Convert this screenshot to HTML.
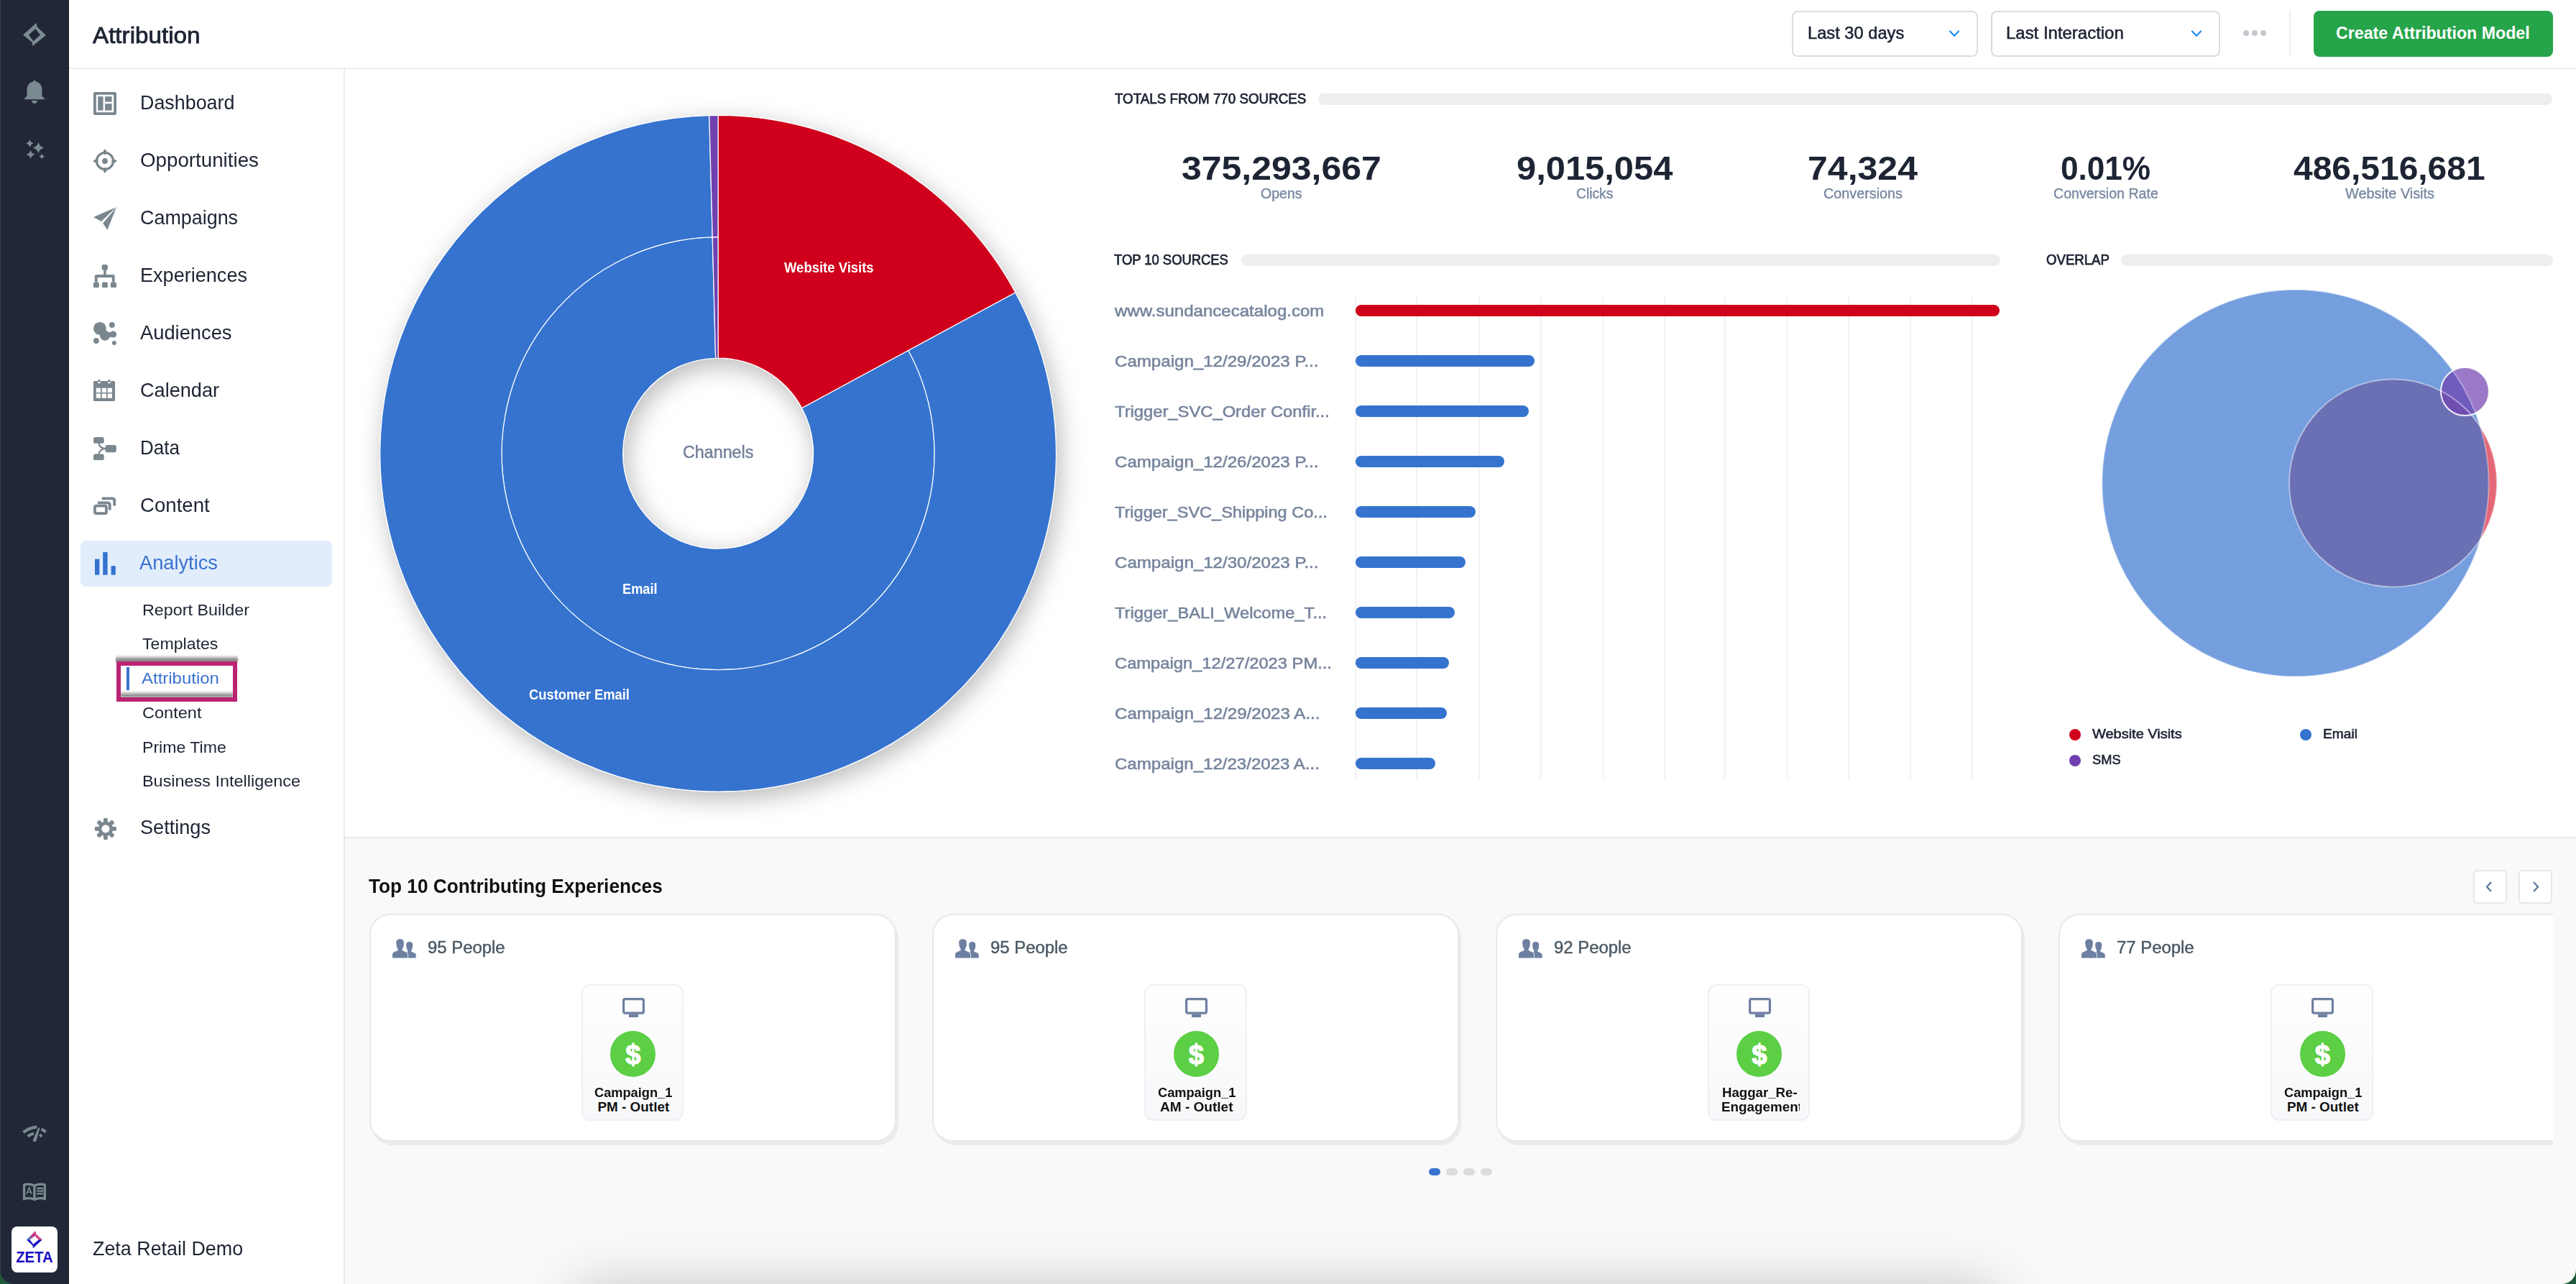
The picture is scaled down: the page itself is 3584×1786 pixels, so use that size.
<!DOCTYPE html><html><head><meta charset="utf-8"><style>
html,body{margin:0;padding:0;width:3584px;height:1786px;overflow:hidden;background:#fff}
body{position:relative;font-family:"Liberation Sans",sans-serif}
.t{position:absolute;white-space:nowrap}
</style></head><body>
<div style="position:absolute;left:0px;top:0px;width:96px;height:1786px;background:#212737"></div>
<div style="position:absolute;left:0px;top:0px;width:1px;height:1770px;background:#3c4150"></div>
<div style="position:absolute;left:95px;top:0px;width:1px;height:1786px;background:#171b26"></div>
<div style="position:absolute;left:96px;top:0px;width:3488px;height:94px;background:#fff"></div>
<div style="position:absolute;left:96px;top:94px;width:3488px;height:2px;background:#ebebeb"></div>
<div style="position:absolute;left:96px;top:96px;width:382px;height:1690px;background:#fff"></div>
<div style="position:absolute;left:478px;top:96px;width:2px;height:1690px;background:#ebebeb"></div>
<div style="position:absolute;left:480px;top:96px;width:3104px;height:1068px;background:#fff"></div>
<div style="position:absolute;left:480px;top:1164px;width:3104px;height:2px;background:#ebebeb"></div>
<div style="position:absolute;left:480px;top:1166px;width:3104px;height:620px;background:#f9f9f9"></div>
<div class="t" style="left:128.50px;top:35.00px;font-size:30.7px;line-height:30.7px;color:#1d2433;transform:scaleX(1.0818);transform-origin:0 0;-webkit-text-stroke:0.8px #1d2433;">Attribution</div>
<div style="position:absolute;left:2493px;top:15px;width:259px;height:63.5px;box-sizing:border-box;border:2px solid #dcdcdc;border-radius:8px;background:#fff"></div>
<div class="t" style="left:2514.70px;top:35.00px;font-size:23.4px;line-height:23.4px;color:#1d2433;transform:scaleX(1.0121);transform-origin:0 0;-webkit-text-stroke:0.55px #1d2433;">Last 30 days</div>
<div style="position:absolute;left:2769.6px;top:15px;width:319px;height:63.5px;box-sizing:border-box;border:2px solid #dcdcdc;border-radius:8px;background:#fff"></div>
<div class="t" style="left:2791.20px;top:35.00px;font-size:23.4px;line-height:23.4px;color:#1d2433;transform:scaleX(1.0238);transform-origin:0 0;-webkit-text-stroke:0.55px #1d2433;">Last Interaction</div>
<svg style="position:absolute;left:2711px;top:40px" width="16" height="14" viewBox="0 0 16 14"><path d="M2 3.5 L8 9.8 L14 3.5" fill="none" stroke="#1f8ef1" stroke-width="2.3" stroke-linecap="round" stroke-linejoin="round"/></svg>
<svg style="position:absolute;left:3047.5px;top:40px" width="16" height="14" viewBox="0 0 16 14"><path d="M2 3.5 L8 9.8 L14 3.5" fill="none" stroke="#1f8ef1" stroke-width="2.3" stroke-linecap="round" stroke-linejoin="round"/></svg>
<div style="position:absolute;left:3120.5px;top:42px;width:8px;height:8px;border-radius:50%;background:#c4c8cf"></div>
<div style="position:absolute;left:3132.5px;top:42px;width:8px;height:8px;border-radius:50%;background:#c4c8cf"></div>
<div style="position:absolute;left:3144.5px;top:42px;width:8px;height:8px;border-radius:50%;background:#c4c8cf"></div>
<div style="position:absolute;left:3185px;top:15px;width:2px;height:63px;background:#ececec"></div>
<div style="position:absolute;left:3219px;top:15px;width:333px;height:63.8px;background:#26a44a;border-radius:8px"></div>
<div class="t" style="left:3250.00px;top:35.00px;font-size:23.2px;line-height:23.2px;color:#fff;font-weight:700;">Create Attribution Model</div>
<svg style="position:absolute;left:28px;top:28px" width="40" height="40" viewBox="28 28 40 40"><path fill="#7b8a90" fill-rule="evenodd" d="M50.6 31.9 L51.8 37.5 L63.9 49 L45.5 63.9 L44.3 58.5 L32.1 48.5 Z M49.3 40 L40 48.6 L46.4 57.2 L56 48.6 Z"/></svg>
<svg style="position:absolute;left:28px;top:28px;display:none" width="1" height="1"></svg>
<svg style="position:absolute;left:32px;top:110px" width="32" height="36" viewBox="0 0 32 36"><path fill="#7b8a90" d="M16 2 C17 2 17.8 2.6 18 3.6 C23.5 4.8 26.5 9.5 26.5 15 L26.5 23 C26.5 24 27.5 25 29 25.8 C30.3 26.5 30.3 28.2 29 28.2 L3 28.2 C1.7 28.2 1.7 26.5 3 25.8 C4.5 25 5.5 24 5.5 23 L5.5 15 C5.5 9.5 8.5 4.8 14 3.6 C14.2 2.6 15 2 16 2 Z M12 30 L20 30 C19.5 32.5 18 34 16 34 C14 34 12.5 32.5 12 30 Z"/></svg>
<svg style="position:absolute;left:0;top:180px" width="96" height="60" viewBox="0 180 96 60"><g fill="#7b8a90"><path d="M53.40 197.70 Q55.12 203.78 61.20 205.50 Q55.12 207.22 53.40 213.30 Q51.68 207.22 45.60 205.50 Q51.68 203.78 53.40 197.70 Z"/><path d="M41.40 194.00 Q42.59 198.21 46.80 199.40 Q42.59 200.59 41.40 204.80 Q40.21 200.59 36.00 199.40 Q40.21 198.21 41.40 194.00 Z"/><path d="M42.60 208.70 Q43.94 213.46 48.70 214.80 Q43.94 216.14 42.60 220.90 Q41.26 216.14 36.50 214.80 Q41.26 213.46 42.60 208.70 Z"/><path d="M58.20 213.70 Q59.06 216.74 62.10 217.60 Q59.06 218.46 58.20 221.50 Q57.34 218.46 54.30 217.60 Q57.34 216.74 58.20 213.70 Z"/></g></svg>
<svg style="position:absolute;left:0;top:1550px" width="96" height="140" viewBox="0 1550 96 140"><g fill="none" stroke="#7b8a90" stroke-width="4.2"><path d="M32.4 1575.2 Q40.5 1568.6 51.2 1567.6"/><path d="M57.6 1570.6 Q61 1572 63.6 1574.8"/><path d="M38.6 1580.6 Q42.3 1577.8 46.8 1576.4"/><path d="M55.2 1578.2 L58.2 1580.8" stroke-width="3.6"/></g><path fill="#7b8a90" d="M53.4 1568.2 L55.5 1568.9 L50.8 1586.2 Q49.6 1588.9 47.1 1588.1 Q45.3 1587.2 46 1585.3 Z"/><path fill="none" stroke="#7b8a90" stroke-width="3.3" d="M33.6 1649 Q33.6 1647.5 35.5 1647.4 Q42 1646.2 47.9 1649.3 Q54 1646.2 60.4 1647.4 Q62.3 1647.5 62.3 1649 L62.3 1667.6 Q55 1665.4 47.9 1668.6 Q41 1665.4 33.6 1667.6 Z M47.9 1649.3 L47.9 1668.4"/><path fill="none" stroke="#7b8a90" stroke-width="1.6" d="M37 1661 L40.6 1652 L44.2 1661 M38.2 1658.2 L43 1658.2"/><path fill="none" stroke="#7b8a90" stroke-width="2.4" d="M51.2 1653.4 Q55.5 1652 60 1653.4 M51.2 1657.1 Q55.5 1655.7 60 1657.1 M51.2 1660.8 Q55.5 1659.4 60 1660.8"/></svg>
<div style="position:absolute;left:16px;top:1706px;width:64px;height:64px;background:#fff;border-radius:8px"></div>
<svg style="position:absolute;left:16px;top:1706px" width="64" height="64" viewBox="0 0 64 64"><defs><linearGradient id="zg1" x1="21" y1="18" x2="43" y2="8" gradientUnits="userSpaceOnUse"><stop offset="0" stop-color="#22b0e0"/><stop offset="0.45" stop-color="#d4307a"/><stop offset="0.75" stop-color="#e05a80"/><stop offset="1" stop-color="#f8e040"/></linearGradient></defs><path fill-rule="evenodd" fill="#1a10c0" d="M33.3 6.4 L34 10.5 L42.7 18.4 L30 30.3 L29.4 26.5 L21 18.4 Z M32.6 12.8 L25.5 18.4 L30.3 24.7 L37.8 18.4 Z"/><path fill="url(#zg1)" d="M33.3 6.4 L34 10.5 L42.7 18.4 L37.8 18.4 L32.6 12.8 L25.5 18.4 L21 18.4 Z"/><text x="0" y="50.1" font-family="Liberation Sans" font-weight="700" font-size="21.8" fill="#1a10c0" transform="translate(6.2 0) scale(0.93 1)">ZETA</text></svg>
<div class="t" style="left:195.30px;top:129.00px;font-size:28px;line-height:28px;color:#1d2433;transform:scaleX(0.9591);transform-origin:0 0;">Dashboard</div>
<div class="t" style="left:195.30px;top:209.00px;font-size:28px;line-height:28px;color:#1d2433;transform:scaleX(0.9904);transform-origin:0 0;">Opportunities</div>
<div class="t" style="left:195.30px;top:289.00px;font-size:28px;line-height:28px;color:#1d2433;transform:scaleX(0.9605);transform-origin:0 0;">Campaigns</div>
<div class="t" style="left:195.30px;top:369.00px;font-size:28px;line-height:28px;color:#1d2433;transform:scaleX(0.9669);transform-origin:0 0;">Experiences</div>
<div class="t" style="left:195.30px;top:449.00px;font-size:28px;line-height:28px;color:#1d2433;transform:scaleX(0.9748);transform-origin:0 0;">Audiences</div>
<div class="t" style="left:195.30px;top:529.00px;font-size:28px;line-height:28px;color:#1d2433;transform:scaleX(0.9683);transform-origin:0 0;">Calendar</div>
<div class="t" style="left:195.30px;top:609.00px;font-size:28px;line-height:28px;color:#1d2433;transform:scaleX(0.9291);transform-origin:0 0;">Data</div>
<div class="t" style="left:195.30px;top:689.00px;font-size:28px;line-height:28px;color:#1d2433;transform:scaleX(0.9857);transform-origin:0 0;">Content</div>
<div style="position:absolute;left:112px;top:752px;width:350px;height:64px;background:#e2edfc;border-radius:8px"></div>
<div class="t" style="left:194.40px;top:769.00px;font-size:28px;line-height:28px;color:#3a72cf;transform:scaleX(0.9723);transform-origin:0 0;">Analytics</div>
<div class="t" style="left:197.50px;top:837.00px;font-size:22.8px;line-height:22.8px;color:#1d2433;transform:scaleX(1.0226);transform-origin:0 0;">Report Builder</div>
<div class="t" style="left:197.50px;top:884.00px;font-size:22.8px;line-height:22.8px;color:#1d2433;transform:scaleX(1.0135);transform-origin:0 0;">Templates</div>
<div class="t" style="left:197.50px;top:932.00px;font-size:22.8px;line-height:22.8px;color:#3a72cf;transform:scaleX(1.0516);transform-origin:0 0;">Attribution</div>
<div class="t" style="left:197.50px;top:980.00px;font-size:22.8px;line-height:22.8px;color:#1d2433;transform:scaleX(1.0325);transform-origin:0 0;">Content</div>
<div class="t" style="left:197.50px;top:1028.00px;font-size:22.8px;line-height:22.8px;color:#1d2433;transform:scaleX(1.0130);transform-origin:0 0;">Prime Time</div>
<div class="t" style="left:197.50px;top:1075.00px;font-size:22.8px;line-height:22.8px;color:#1d2433;transform:scaleX(1.0271);transform-origin:0 0;">Business Intelligence</div>
<div class="t" style="left:194.70px;top:1137.00px;font-size:28px;line-height:28px;color:#1d2433;transform:scaleX(0.9684);transform-origin:0 0;">Settings</div>
<div class="t" style="left:128.90px;top:1723.00px;font-size:27.4px;line-height:27.4px;color:#1d2433;transform:scaleX(0.9812);transform-origin:0 0;">Zeta Retail Demo</div>
<svg style="position:absolute;left:130px;top:128px" width="32" height="32" viewBox="0 0 32 32"><rect x="0" y="0" width="32" height="32" rx="2.5" fill="#7a878e"/><rect x="3.8" y="3.8" width="24.4" height="24.4" fill="#fff"/><rect x="6.2" y="6.2" width="7.4" height="19.4" fill="#7a878e"/><rect x="16" y="6.2" width="9.6" height="7.4" fill="#7a878e"/><rect x="16" y="16.2" width="9.6" height="9.4" fill="#7a878e"/></svg>
<svg style="position:absolute;left:130px;top:208px" width="32" height="32" viewBox="0 0 32 32"><g fill="#7a878e"><circle cx="16" cy="16" r="11.6" fill="none" stroke="#7a878e" stroke-width="3.3"/><circle cx="16" cy="16" r="3.9"/><ellipse cx="16" cy="3.3" rx="2.1" ry="3.6"/><ellipse cx="16" cy="28.7" rx="2.1" ry="3.6"/><ellipse cx="3.3" cy="16" rx="3.6" ry="2.1"/><ellipse cx="28.7" cy="16" rx="3.6" ry="2.1"/></g></svg>
<svg style="position:absolute;left:130px;top:288px" width="32" height="32" viewBox="0 0 32 32"><g fill="#7a878e"><path d="M0 14.1 L31.5 0.3 L11 20 Z"/><path d="M32 0.5 L13.2 22.6 L19.3 31.7 Z"/></g></svg>
<svg style="position:absolute;left:130px;top:368px" width="32" height="32" viewBox="0 0 32 32"><g fill="#7a878e"><rect x="11.7" y="0" width="8.2" height="7.8" rx="2"/><rect x="14.2" y="7" width="3.5" height="11"/><path d="M1.8 24.5 L1.8 16 Q1.8 13.9 3.9 13.9 L27.5 13.9 Q29.6 13.9 29.6 16 L29.6 24.5 L25.8 24.5 L25.8 18 L5.6 18 L5.6 24.5 Z"/><rect x="0" y="24.4" width="7.9" height="7.9" rx="2"/><rect x="11.9" y="24.4" width="8" height="7.9" rx="2"/><rect x="23.9" y="24.4" width="8.1" height="7.9" rx="2"/></g></svg>
<svg style="position:absolute;left:130px;top:448px" width="32" height="32" viewBox="0 0 32 32"><g fill="#7a878e"><circle cx="8.9" cy="8.9" r="8.9"/><circle cx="16" cy="18.8" r="7"/><path d="M10 12 L20 15 L14 22 Z"/><circle cx="27.5" cy="17" r="4.6"/><path d="M19 15 L26 13.5 L26 20.5 L20 22 Z"/><circle cx="25.8" cy="4" r="4"/><circle cx="3.9" cy="26" r="3.9"/><circle cx="28.9" cy="29" r="3"/></g></svg>
<svg style="position:absolute;left:130px;top:528px" width="32" height="32" viewBox="0 0 32 32"><g fill="#7a878e"><path fill-rule="evenodd" d="M0 3.5 Q0 2 1.5 2 L5.8 2 Q6 5.5 8 5.5 Q10 5.5 10.2 2 L19.8 2 Q20 5.5 22 5.5 Q24 5.5 24.2 2 L28.5 2 Q30 2 30 3.5 L30 28.5 Q30 30 28.5 30 L1.5 30 Q0 30 0 28.5 Z M3.8 11.8 H10 V18 H3.8 Z M11.7 11.8 H18 V18 H11.7 Z M19.6 11.8 H26 V18 H19.6 Z M3.8 19.6 H10 V25.8 H3.8 Z M11.7 19.6 H18 V25.8 H11.7 Z M19.6 19.6 H26 V25.8 H19.6 Z"/><ellipse cx="7.9" cy="1.8" rx="1.8" ry="2"/><ellipse cx="21.9" cy="1.8" rx="1.8" ry="2"/></g></svg>
<svg style="position:absolute;left:130px;top:608px" width="32" height="32" viewBox="0 0 32 32"><g fill="#7a878e"><rect x="0" y="0" width="14.7" height="8.7" rx="2.5"/><rect x="0" y="23.5" width="14.7" height="8.7" rx="2.5"/><rect x="16.6" y="10.9" width="15.2" height="10.3" rx="2.5"/><path d="M7.3 8 C8 12.5 11 15.5 17 16 C11 16.5 8 19.5 7.3 24" fill="none" stroke="#7a878e" stroke-width="2.2"/></g></svg>
<svg style="position:absolute;left:130px;top:688px" width="32" height="32" viewBox="0 0 32 32"><g fill="none" stroke="#7a878e" stroke-width="3.8"><rect x="1.9" y="15.6" width="16" height="10.6" rx="2"/><path d="M5.8 11.3 L19.8 11.3 Q22.7 11.3 22.7 14.2 L22.7 21.5"/><path d="M11.8 5.3 L26.3 5.3 Q29.2 5.3 29.2 8.2 L29.2 15.5"/></g></svg>
<svg style="position:absolute;left:132px;top:768px" width="32" height="32" viewBox="0 0 32 32"><g fill="#3572cf"><rect x="0" y="9.6" width="6.4" height="22.1"/><rect x="11.2" y="0" width="6.4" height="31.7"/><rect x="22.6" y="19.2" width="6.2" height="12.5"/></g></svg>
<svg style="position:absolute;left:130px;top:1136px" width="32" height="32" viewBox="0 0 32 32"><g transform="translate(16.9 16.9)" fill="#7a878e"><circle r="10.2"/><rect x="-2.9" y="-15" width="5.8" height="8" rx="1.3" transform="rotate(0)"/><rect x="-2.9" y="-15" width="5.8" height="8" rx="1.3" transform="rotate(45)"/><rect x="-2.9" y="-15" width="5.8" height="8" rx="1.3" transform="rotate(90)"/><rect x="-2.9" y="-15" width="5.8" height="8" rx="1.3" transform="rotate(135)"/><rect x="-2.9" y="-15" width="5.8" height="8" rx="1.3" transform="rotate(180)"/><rect x="-2.9" y="-15" width="5.8" height="8" rx="1.3" transform="rotate(225)"/><rect x="-2.9" y="-15" width="5.8" height="8" rx="1.3" transform="rotate(270)"/><rect x="-2.9" y="-15" width="5.8" height="8" rx="1.3" transform="rotate(315)"/><circle r="5.6" fill="#fff"/></g></svg>
<div style="position:absolute;left:161px;top:912px;width:170px;height:9px;background:linear-gradient(rgba(0,0,0,0.05),rgba(0,0,0,0.55) 75%,rgba(0,0,0,0.3));filter:blur(1px)"></div>
<div style="position:absolute;left:162px;top:920px;width:168px;height:56px;box-sizing:border-box;border:6px solid #bc2373;background:#fff"></div>
<div style="position:absolute;left:168px;top:961px;width:156px;height:9px;background:linear-gradient(rgba(0,0,0,0),rgba(0,0,0,0.5) 80%,rgba(0,0,0,0.3));filter:blur(1px)"></div>
<div style="position:absolute;left:176px;top:928px;width:4px;height:32px;background:#3a72cf"></div>
<div class="t" style="left:196.50px;top:932.00px;font-size:22.8px;line-height:22.8px;color:#3a72cf;transform:scaleX(1.0516);transform-origin:0 0;">Attribution</div>
<svg style="position:absolute;left:0;top:0" width="1560" height="1160" viewBox="0 0 1560 1160"><defs><filter id="ds" x="-20%" y="-20%" width="140%" height="140%"><feDropShadow dx="5" dy="10" stdDeviation="17" flood-color="#000" flood-opacity="0.27"/></filter></defs><g filter="url(#ds)" stroke="#fff" stroke-width="1.2" stroke-linejoin="round"><path fill="#d0021b" d="M999.10 160.40 A470.3 470.3 0 0 1 1412.80 407.01 L1115.65 567.68 A132.5 132.5 0 0 0 999.10 498.20 Z"/><path fill="#3573cf" d="M1263.87 487.54 A301 301 0 1 1 991.22 329.80 L995.63 498.25 A132.5 132.5 0 1 0 1115.65 567.68 Z"/><path fill="#3573cf" d="M1412.80 407.01 A470.3 470.3 0 1 1 986.79 160.56 L991.22 329.80 A301 301 0 1 0 1263.87 487.54 Z"/><path fill="#7040b0" d="M991.22 329.80 A301 301 0 0 1 999.10 329.70 L999.10 498.20 A132.5 132.5 0 0 0 995.63 498.25 Z"/><path fill="#7040b0" d="M986.79 160.56 A470.3 470.3 0 0 1 999.10 160.40 L999.10 329.70 A301 301 0 0 0 991.22 329.80 Z"/></g></svg>
<div class="t" style="left:1090.75px;top:363.00px;font-size:19.6px;line-height:19.6px;color:#fff;font-weight:700;transform:scaleX(0.9433);transform-origin:0 0;">Website Visits</div>
<div class="t" style="left:866.40px;top:809.00px;font-size:20px;line-height:20px;color:#fff;font-weight:700;transform:scaleX(0.9101);transform-origin:0 0;">Email</div>
<div class="t" style="left:736.00px;top:956.00px;font-size:20px;line-height:20px;color:#fff;font-weight:700;transform:scaleX(0.9192);transform-origin:0 0;">Customer Email</div>
<div class="t" style="left:949.80px;top:618.00px;font-size:23.1px;line-height:23.1px;color:#74829a;transform:scaleX(1.0082);transform-origin:0 0;-webkit-text-stroke:0.5px #74829a;">Channels</div>
<div class="t" style="left:1551.00px;top:128.00px;font-size:19.8px;line-height:19.8px;color:#1d2433;transform:scaleX(0.9487);transform-origin:0 0;-webkit-text-stroke:0.75px #1d2433;">TOTALS FROM 770 SOURCES</div>
<div style="position:absolute;left:1834px;top:129.5px;width:1717px;height:16px;background:#edeef0;border-radius:8px"></div>
<div class="t" style="left:1644.05px;top:211.00px;font-size:46.6px;line-height:46.6px;color:#1d2433;font-weight:700;transform:scaleX(1.0718);transform-origin:0 0;">375,293,667</div>
<div class="t" style="left:1754.15px;top:259.00px;font-size:20px;line-height:20px;color:#7b8aa3;transform:scaleX(0.9762);transform-origin:0 0;-webkit-text-stroke:0.45px #7b8aa3;">Opens</div>
<div class="t" style="left:2110.00px;top:211.00px;font-size:46.6px;line-height:46.6px;color:#1d2433;font-weight:700;transform:scaleX(1.0487);transform-origin:0 0;">9,015,054</div>
<div class="t" style="left:2193.05px;top:259.00px;font-size:20px;line-height:20px;color:#7b8aa3;transform:scaleX(0.9625);transform-origin:0 0;-webkit-text-stroke:0.45px #7b8aa3;">Clicks</div>
<div class="t" style="left:2515.00px;top:211.00px;font-size:46.6px;line-height:46.6px;color:#1d2433;font-weight:700;transform:scaleX(1.0737);transform-origin:0 0;">74,324</div>
<div class="t" style="left:2536.50px;top:259.00px;font-size:20px;line-height:20px;color:#7b8aa3;transform:scaleX(0.9892);transform-origin:0 0;-webkit-text-stroke:0.45px #7b8aa3;">Conversions</div>
<div class="t" style="left:2867.10px;top:211.00px;font-size:46.6px;line-height:46.6px;color:#1d2433;font-weight:700;transform:scaleX(0.9463);transform-origin:0 0;">0.01%</div>
<div class="t" style="left:2856.70px;top:259.00px;font-size:20px;line-height:20px;color:#7b8aa3;transform:scaleX(0.9785);transform-origin:0 0;-webkit-text-stroke:0.45px #7b8aa3;">Conversion Rate</div>
<div class="t" style="left:3191.20px;top:211.00px;font-size:46.6px;line-height:46.6px;color:#1d2433;font-weight:700;transform:scaleX(1.0289);transform-origin:0 0;">486,516,681</div>
<div class="t" style="left:3262.50px;top:259.00px;font-size:20px;line-height:20px;color:#7b8aa3;transform:scaleX(0.9928);transform-origin:0 0;-webkit-text-stroke:0.45px #7b8aa3;">Website Visits</div>
<div class="t" style="left:1550.40px;top:352.00px;font-size:19.3px;line-height:19.3px;color:#1d2433;transform:scaleX(0.9544);transform-origin:0 0;-webkit-text-stroke:0.75px #1d2433;">TOP 10 SOURCES</div>
<div style="position:absolute;left:1726.6px;top:353.8px;width:1056px;height:16px;background:#edeef0;border-radius:8px"></div>
<div style="position:absolute;left:1885px;top:412px;width:2px;height:670.5px;background:#f0f1f3"></div>
<div style="position:absolute;left:1970px;top:412px;width:2px;height:670.5px;background:#f0f1f3"></div>
<div style="position:absolute;left:2057px;top:412px;width:2px;height:670.5px;background:#f0f1f3"></div>
<div style="position:absolute;left:2143px;top:412px;width:2px;height:670.5px;background:#f0f1f3"></div>
<div style="position:absolute;left:2229px;top:412px;width:2px;height:670.5px;background:#f0f1f3"></div>
<div style="position:absolute;left:2315px;top:412px;width:2px;height:670.5px;background:#f0f1f3"></div>
<div style="position:absolute;left:2399px;top:412px;width:2px;height:670.5px;background:#f0f1f3"></div>
<div style="position:absolute;left:2485px;top:412px;width:2px;height:670.5px;background:#f0f1f3"></div>
<div style="position:absolute;left:2571px;top:412px;width:2px;height:670.5px;background:#f0f1f3"></div>
<div style="position:absolute;left:2657px;top:412px;width:2px;height:670.5px;background:#f0f1f3"></div>
<div style="position:absolute;left:2743px;top:412px;width:2px;height:670.5px;background:#f0f1f3"></div>
<div class="t" style="left:1551.01px;top:421.00px;font-size:22.9px;line-height:22.9px;color:#77859d;transform:scaleX(1.0504);transform-origin:0 0;-webkit-text-stroke:0.6px #77859d;">www.sundancecatalog.com</div>
<div style="position:absolute;left:1885.9px;top:424.0px;width:896.5999999999999px;height:16px;background:#d0021b;border-radius:8px"></div>
<div class="t" style="left:1550.90px;top:491.00px;font-size:22.9px;line-height:22.9px;color:#77859d;transform:scaleX(1.0523);transform-origin:0 0;-webkit-text-stroke:0.6px #77859d;">Campaign_12/29/2023 P...</div>
<div style="position:absolute;left:1885.9px;top:493.95px;width:249.5px;height:16px;background:#3573cf;border-radius:8px"></div>
<div class="t" style="left:1550.90px;top:561.00px;font-size:22.9px;line-height:22.9px;color:#77859d;transform:scaleX(1.0378);transform-origin:0 0;-webkit-text-stroke:0.6px #77859d;">Trigger_SVC_Order Confir...</div>
<div style="position:absolute;left:1885.9px;top:563.9px;width:241.5999999999999px;height:16px;background:#3573cf;border-radius:8px"></div>
<div class="t" style="left:1550.90px;top:631.00px;font-size:22.9px;line-height:22.9px;color:#77859d;transform:scaleX(1.0523);transform-origin:0 0;-webkit-text-stroke:0.6px #77859d;">Campaign_12/26/2023 P...</div>
<div style="position:absolute;left:1885.9px;top:633.85px;width:207.5999999999999px;height:16px;background:#3573cf;border-radius:8px"></div>
<div class="t" style="left:1550.90px;top:701.00px;font-size:22.9px;line-height:22.9px;color:#77859d;transform:scaleX(1.0274);transform-origin:0 0;-webkit-text-stroke:0.6px #77859d;">Trigger_SVC_Shipping Co...</div>
<div style="position:absolute;left:1885.9px;top:703.8px;width:167.5px;height:16px;background:#3573cf;border-radius:8px"></div>
<div class="t" style="left:1550.90px;top:771.00px;font-size:22.9px;line-height:22.9px;color:#77859d;transform:scaleX(1.0523);transform-origin:0 0;-webkit-text-stroke:0.6px #77859d;">Campaign_12/30/2023 P...</div>
<div style="position:absolute;left:1885.9px;top:773.75px;width:153.5px;height:16px;background:#3573cf;border-radius:8px"></div>
<div class="t" style="left:1550.90px;top:841.00px;font-size:22.9px;line-height:22.9px;color:#77859d;transform:scaleX(1.0358);transform-origin:0 0;-webkit-text-stroke:0.6px #77859d;">Trigger_BALI_Welcome_T...</div>
<div style="position:absolute;left:1885.9px;top:843.7px;width:137.69999999999982px;height:16px;background:#3573cf;border-radius:8px"></div>
<div class="t" style="left:1550.90px;top:911.00px;font-size:22.9px;line-height:22.9px;color:#77859d;transform:scaleX(1.0360);transform-origin:0 0;-webkit-text-stroke:0.6px #77859d;">Campaign_12/27/2023 PM...</div>
<div style="position:absolute;left:1885.9px;top:913.6500000000001px;width:129.79999999999995px;height:16px;background:#3573cf;border-radius:8px"></div>
<div class="t" style="left:1550.90px;top:981.00px;font-size:22.9px;line-height:22.9px;color:#77859d;transform:scaleX(1.0531);transform-origin:0 0;-webkit-text-stroke:0.6px #77859d;">Campaign_12/29/2023 A...</div>
<div style="position:absolute;left:1885.9px;top:983.6px;width:127.39999999999986px;height:16px;background:#3573cf;border-radius:8px"></div>
<div class="t" style="left:1550.90px;top:1051.00px;font-size:22.9px;line-height:22.9px;color:#77859d;transform:scaleX(1.0509);transform-origin:0 0;-webkit-text-stroke:0.6px #77859d;">Campaign_12/23/2023 A...</div>
<div style="position:absolute;left:1885.9px;top:1053.5500000000002px;width:111.59999999999991px;height:16px;background:#3573cf;border-radius:8px"></div>
<div class="t" style="left:2847.30px;top:352.00px;font-size:19.3px;line-height:19.3px;color:#1d2433;transform:scaleX(0.9649);transform-origin:0 0;-webkit-text-stroke:0.75px #1d2433;">OVERLAP</div>
<div style="position:absolute;left:2950.6px;top:353.8px;width:601px;height:16px;background:#edeef0;border-radius:8px"></div>
<svg style="position:absolute;left:2800px;top:380px" width="784" height="620" viewBox="2800 380 784 620"><circle cx="3329.5" cy="672" r="144.5" fill="#d0021b" fill-opacity="0.6"/><circle cx="3193.6" cy="672" r="269" fill="#3573cf" fill-opacity="0.69"/><circle cx="3429.5" cy="544.5" r="33.5" fill="#7040b0" fill-opacity="0.7"/><g fill="none" stroke="#fff" stroke-width="2"><circle cx="3329.5" cy="672" r="144.5" stroke-opacity="0.45"/><circle cx="3193.6" cy="672" r="269" stroke-opacity="0.35"/><circle cx="3429.5" cy="544.5" r="33.5" stroke-opacity="0.9"/></g></svg>
<div style="position:absolute;left:2878.9px;top:1013.9px;width:16px;height:16px;background:#d0021b;border-radius:50%"></div>
<div class="t" style="left:2911.10px;top:1011.00px;font-size:19px;line-height:19px;color:#1d2433;transform:scaleX(1.0506);transform-origin:0 0;-webkit-text-stroke:0.6px #1d2433;">Website Visits</div>
<div style="position:absolute;left:3199.5px;top:1013.9px;width:16px;height:16px;background:#3573cf;border-radius:50%"></div>
<div class="t" style="left:3231.70px;top:1011.00px;font-size:19px;line-height:19px;color:#1d2433;transform:scaleX(1.0084);transform-origin:0 0;-webkit-text-stroke:0.6px #1d2433;">Email</div>
<div style="position:absolute;left:2878.9px;top:1049.9px;width:16px;height:16px;background:#7040b0;border-radius:50%"></div>
<div class="t" style="left:2911.10px;top:1047.00px;font-size:19px;line-height:19px;color:#1d2433;transform:scaleX(0.9612);transform-origin:0 0;-webkit-text-stroke:0.6px #1d2433;">SMS</div>
<div class="t" style="left:512.80px;top:1219.00px;font-size:27.3px;line-height:27.3px;color:#111;font-weight:700;transform:scaleX(0.9601);transform-origin:0 0;">Top 10 Contributing Experiences</div>
<div style="position:absolute;left:3440.5px;top:1210.4px;width:47px;height:47px;box-sizing:border-box;border:2px solid #e7e7e7;border-radius:5px;background:#fff"></div>
<svg style="position:absolute;left:3456.0px;top:1223px" width="16" height="22" viewBox="0 0 16 22"><path d="M10 4 L4 10.5 L10 17" fill="none" stroke="#647aa0" stroke-width="2.4" stroke-linecap="butt" stroke-linejoin="miter"/></svg>
<div style="position:absolute;left:3504.3px;top:1210.4px;width:47px;height:47px;box-sizing:border-box;border:2px solid #e7e7e7;border-radius:5px;background:#fff"></div>
<svg style="position:absolute;left:3519.8px;top:1223px" width="16" height="22" viewBox="0 0 16 22"><path d="M5 4 L11 10.5 L5 17" fill="none" stroke="#647aa0" stroke-width="2.4" stroke-linecap="butt" stroke-linejoin="miter"/></svg>
<div style="position:absolute;left:480px;top:1260px;width:3072px;height:360px;overflow:hidden">
<div style="position:absolute;left:36.60000000000002px;top:15.5px;width:733.3px;height:317.3px;border-radius:29px;background:#ebebeb"></div>
<div style="position:absolute;left:33.60000000000002px;top:10.5px;width:733.3px;height:317.3px;box-sizing:border-box;border:2px solid #e9e9e9;border-radius:29px;background:#fff"></div>
<svg style="position:absolute;left:65.60000000000002px;top:45.700000000000045px" width="34" height="28" viewBox="545.9 1305.7 34 28"><path d="M545.9 1332.3 L545.9 1327 Q546 1324.9 548.3 1323.9 L553.4 1321.8 L553.6 1319.8 Q551.8 1318.2 551.5 1315 L551 1310.5 Q551.3 1305.9 556.5 1305.9 Q561.6 1305.9 561.8 1310.5 L561.5 1315 Q561.2 1318.2 559.4 1319.8 L559.6 1321.8 L564.6 1323.9 Q567 1324.9 567 1327 L567 1332.3 Z" fill="#6e80a2" transform="translate(569.6 1332.3) scale(0.852) translate(-556.45 -1332.3)"/><path d="M545.9 1332.3 L545.9 1327 Q546 1324.9 548.3 1323.9 L553.4 1321.8 L553.6 1319.8 Q551.8 1318.2 551.5 1315 L551 1310.5 Q551.3 1305.9 556.5 1305.9 Q561.6 1305.9 561.8 1310.5 L561.5 1315 Q561.2 1318.2 559.4 1319.8 L559.6 1321.8 L564.6 1323.9 Q567 1324.9 567 1327 L567 1332.3 Z" fill="#6e80a2" stroke="#fff" stroke-width="1.5" paint-order="stroke"/></svg>
<div style="position:absolute;left:328.70000000000005px;top:109px;width:142.6px;height:190.3px;box-sizing:border-box;border:2px solid #eef0f3;border-radius:12px;background:linear-gradient(#fefefe,#f7f8fa)"></div>
<svg style="position:absolute;left:385.6px;top:127.59999999999991px" width="31" height="28" viewBox="0 0 31 28"><rect x="1.6" y="1.6" width="27.8" height="19.5" rx="2" fill="none" stroke="#6e7fa0" stroke-width="3.2"/><rect x="9" y="22.5" width="13" height="4.5" fill="#6e7fa0"/></svg>
<div style="position:absolute;left:369.0px;top:174.29999999999995px;width:63.4px;height:63.4px;border-radius:50%;background:#5ccf44"></div>
<div style="position:absolute;left:820.0999999999999px;top:15.5px;width:733.3px;height:317.3px;border-radius:29px;background:#ebebeb"></div>
<div style="position:absolute;left:817.0999999999999px;top:10.5px;width:733.3px;height:317.3px;box-sizing:border-box;border:2px solid #e9e9e9;border-radius:29px;background:#fff"></div>
<svg style="position:absolute;left:849.0999999999999px;top:45.700000000000045px" width="34" height="28" viewBox="545.9 1305.7 34 28"><path d="M545.9 1332.3 L545.9 1327 Q546 1324.9 548.3 1323.9 L553.4 1321.8 L553.6 1319.8 Q551.8 1318.2 551.5 1315 L551 1310.5 Q551.3 1305.9 556.5 1305.9 Q561.6 1305.9 561.8 1310.5 L561.5 1315 Q561.2 1318.2 559.4 1319.8 L559.6 1321.8 L564.6 1323.9 Q567 1324.9 567 1327 L567 1332.3 Z" fill="#6e80a2" transform="translate(569.6 1332.3) scale(0.852) translate(-556.45 -1332.3)"/><path d="M545.9 1332.3 L545.9 1327 Q546 1324.9 548.3 1323.9 L553.4 1321.8 L553.6 1319.8 Q551.8 1318.2 551.5 1315 L551 1310.5 Q551.3 1305.9 556.5 1305.9 Q561.6 1305.9 561.8 1310.5 L561.5 1315 Q561.2 1318.2 559.4 1319.8 L559.6 1321.8 L564.6 1323.9 Q567 1324.9 567 1327 L567 1332.3 Z" fill="#6e80a2" stroke="#fff" stroke-width="1.5" paint-order="stroke"/></svg>
<div style="position:absolute;left:1112.1999999999998px;top:109px;width:142.6px;height:190.3px;box-sizing:border-box;border:2px solid #eef0f3;border-radius:12px;background:linear-gradient(#fefefe,#f7f8fa)"></div>
<svg style="position:absolute;left:1169.1px;top:127.59999999999991px" width="31" height="28" viewBox="0 0 31 28"><rect x="1.6" y="1.6" width="27.8" height="19.5" rx="2" fill="none" stroke="#6e7fa0" stroke-width="3.2"/><rect x="9" y="22.5" width="13" height="4.5" fill="#6e7fa0"/></svg>
<div style="position:absolute;left:1152.5px;top:174.29999999999995px;width:63.4px;height:63.4px;border-radius:50%;background:#5ccf44"></div>
<div style="position:absolute;left:1603.6px;top:15.5px;width:733.3px;height:317.3px;border-radius:29px;background:#ebebeb"></div>
<div style="position:absolute;left:1600.6px;top:10.5px;width:733.3px;height:317.3px;box-sizing:border-box;border:2px solid #e9e9e9;border-radius:29px;background:#fff"></div>
<svg style="position:absolute;left:1632.6px;top:45.700000000000045px" width="34" height="28" viewBox="545.9 1305.7 34 28"><path d="M545.9 1332.3 L545.9 1327 Q546 1324.9 548.3 1323.9 L553.4 1321.8 L553.6 1319.8 Q551.8 1318.2 551.5 1315 L551 1310.5 Q551.3 1305.9 556.5 1305.9 Q561.6 1305.9 561.8 1310.5 L561.5 1315 Q561.2 1318.2 559.4 1319.8 L559.6 1321.8 L564.6 1323.9 Q567 1324.9 567 1327 L567 1332.3 Z" fill="#6e80a2" transform="translate(569.6 1332.3) scale(0.852) translate(-556.45 -1332.3)"/><path d="M545.9 1332.3 L545.9 1327 Q546 1324.9 548.3 1323.9 L553.4 1321.8 L553.6 1319.8 Q551.8 1318.2 551.5 1315 L551 1310.5 Q551.3 1305.9 556.5 1305.9 Q561.6 1305.9 561.8 1310.5 L561.5 1315 Q561.2 1318.2 559.4 1319.8 L559.6 1321.8 L564.6 1323.9 Q567 1324.9 567 1327 L567 1332.3 Z" fill="#6e80a2" stroke="#fff" stroke-width="1.5" paint-order="stroke"/></svg>
<div style="position:absolute;left:1895.6999999999998px;top:109px;width:142.6px;height:190.3px;box-sizing:border-box;border:2px solid #eef0f3;border-radius:12px;background:linear-gradient(#fefefe,#f7f8fa)"></div>
<svg style="position:absolute;left:1952.6px;top:127.59999999999991px" width="31" height="28" viewBox="0 0 31 28"><rect x="1.6" y="1.6" width="27.8" height="19.5" rx="2" fill="none" stroke="#6e7fa0" stroke-width="3.2"/><rect x="9" y="22.5" width="13" height="4.5" fill="#6e7fa0"/></svg>
<div style="position:absolute;left:1936.0px;top:174.29999999999995px;width:63.4px;height:63.4px;border-radius:50%;background:#5ccf44"></div>
<div style="position:absolute;left:2387.1px;top:15.5px;width:733.3px;height:317.3px;border-radius:29px;background:#ebebeb"></div>
<div style="position:absolute;left:2384.1px;top:10.5px;width:733.3px;height:317.3px;box-sizing:border-box;border:2px solid #e9e9e9;border-radius:29px;background:#fff"></div>
<svg style="position:absolute;left:2416.1px;top:45.700000000000045px" width="34" height="28" viewBox="545.9 1305.7 34 28"><path d="M545.9 1332.3 L545.9 1327 Q546 1324.9 548.3 1323.9 L553.4 1321.8 L553.6 1319.8 Q551.8 1318.2 551.5 1315 L551 1310.5 Q551.3 1305.9 556.5 1305.9 Q561.6 1305.9 561.8 1310.5 L561.5 1315 Q561.2 1318.2 559.4 1319.8 L559.6 1321.8 L564.6 1323.9 Q567 1324.9 567 1327 L567 1332.3 Z" fill="#6e80a2" transform="translate(569.6 1332.3) scale(0.852) translate(-556.45 -1332.3)"/><path d="M545.9 1332.3 L545.9 1327 Q546 1324.9 548.3 1323.9 L553.4 1321.8 L553.6 1319.8 Q551.8 1318.2 551.5 1315 L551 1310.5 Q551.3 1305.9 556.5 1305.9 Q561.6 1305.9 561.8 1310.5 L561.5 1315 Q561.2 1318.2 559.4 1319.8 L559.6 1321.8 L564.6 1323.9 Q567 1324.9 567 1327 L567 1332.3 Z" fill="#6e80a2" stroke="#fff" stroke-width="1.5" paint-order="stroke"/></svg>
<div style="position:absolute;left:2679.2px;top:109px;width:142.6px;height:190.3px;box-sizing:border-box;border:2px solid #eef0f3;border-radius:12px;background:linear-gradient(#fefefe,#f7f8fa)"></div>
<svg style="position:absolute;left:2736.1px;top:127.59999999999991px" width="31" height="28" viewBox="0 0 31 28"><rect x="1.6" y="1.6" width="27.8" height="19.5" rx="2" fill="none" stroke="#6e7fa0" stroke-width="3.2"/><rect x="9" y="22.5" width="13" height="4.5" fill="#6e7fa0"/></svg>
<div style="position:absolute;left:2719.5px;top:174.29999999999995px;width:63.4px;height:63.4px;border-radius:50%;background:#5ccf44"></div>
</div>
<div class="t" style="left:594.80px;top:1307.00px;font-size:23px;line-height:23px;color:#4a5964;transform:scaleX(1.0386);transform-origin:0 0;-webkit-text-stroke:0.45px #4a5964;">95 People</div>
<div class="t" style="left:870.25px;top:1448.00px;font-size:38px;line-height:38px;color:#fff;font-weight:700;-webkit-text-stroke:1.2px #fff;">$</div>
<div class="t" style="left:827.10px;top:1511.00px;font-size:18.9px;line-height:18.9px;color:#111;font-weight:700;transform:scaleX(0.9644);transform-origin:0 0;">Campaign_1</div>
<div class="t" style="left:831.50px;top:1531.00px;font-size:18.9px;line-height:18.9px;color:#111;font-weight:700;">PM - Outlet</div>
<div class="t" style="left:1378.30px;top:1307.00px;font-size:23px;line-height:23px;color:#4a5964;transform:scaleX(1.0386);transform-origin:0 0;-webkit-text-stroke:0.45px #4a5964;">95 People</div>
<div class="t" style="left:1653.75px;top:1448.00px;font-size:38px;line-height:38px;color:#fff;font-weight:700;-webkit-text-stroke:1.2px #fff;">$</div>
<div class="t" style="left:1610.60px;top:1511.00px;font-size:18.9px;line-height:18.9px;color:#111;font-weight:700;transform:scaleX(0.9644);transform-origin:0 0;">Campaign_1</div>
<div class="t" style="left:1614.00px;top:1531.00px;font-size:18.9px;line-height:18.9px;color:#111;font-weight:700;transform:scaleX(1.0079);transform-origin:0 0;">AM - Outlet</div>
<div class="t" style="left:2161.80px;top:1307.00px;font-size:23px;line-height:23px;color:#4a5964;transform:scaleX(1.0386);transform-origin:0 0;-webkit-text-stroke:0.45px #4a5964;">92 People</div>
<div class="t" style="left:2437.25px;top:1448.00px;font-size:38px;line-height:38px;color:#fff;font-weight:700;-webkit-text-stroke:1.2px #fff;">$</div>
<div class="t" style="left:2395.95px;top:1511.00px;font-size:18.9px;line-height:18.9px;color:#111;font-weight:700;transform:scaleX(0.9868);transform-origin:0 0;">Haggar_Re-</div>
<div style="position:absolute;left:2380px;top:1525px;width:123.5px;height:30px;overflow:hidden">
<div class="t" style="left:15.20px;top:6.00px;font-size:18.9px;line-height:18.9px;color:#111;font-weight:700;transform:scaleX(0.9965);transform-origin:0 0;">Engagement</div>
</div>
<div class="t" style="left:2945.30px;top:1307.00px;font-size:23px;line-height:23px;color:#4a5964;transform:scaleX(1.0386);transform-origin:0 0;-webkit-text-stroke:0.45px #4a5964;">77 People</div>
<div class="t" style="left:3220.75px;top:1448.00px;font-size:38px;line-height:38px;color:#fff;font-weight:700;-webkit-text-stroke:1.2px #fff;">$</div>
<div class="t" style="left:3177.60px;top:1511.00px;font-size:18.9px;line-height:18.9px;color:#111;font-weight:700;transform:scaleX(0.9644);transform-origin:0 0;">Campaign_1</div>
<div class="t" style="left:3182.00px;top:1531.00px;font-size:18.9px;line-height:18.9px;color:#111;font-weight:700;">PM - Outlet</div>
<div style="position:absolute;left:1987.6px;top:1624.5px;width:16.2px;height:10.5px;border-radius:5px;background:#3573cf"></div>
<div style="position:absolute;left:2011.8px;top:1624.5px;width:16.2px;height:10.5px;border-radius:5px;background:#dcdcdc"></div>
<div style="position:absolute;left:2036px;top:1624.5px;width:16.2px;height:10.5px;border-radius:5px;background:#dcdcdc"></div>
<div style="position:absolute;left:2059.6px;top:1624.5px;width:16.2px;height:10.5px;border-radius:5px;background:#dcdcdc"></div>
<div style="position:absolute;left:810px;top:1800px;width:1960px;height:200px;box-shadow:0 0 80px 6px rgba(0,0,0,0.24);background:#000"></div>
<svg style="position:absolute;left:0;top:1766px" width="20" height="20" viewBox="0 0 20 20"><path d="M0 0 L0 20 L20 20 A20 20 0 0 1 0 0 Z" fill="#1e5a3a"/></svg>
<svg style="position:absolute;left:3564px;top:1766px" width="20" height="20" viewBox="0 0 20 20"><path d="M20 0 L20 20 L0 20 A20 20 0 0 0 20 0 Z" fill="#1e5a3a"/></svg>
</body></html>
